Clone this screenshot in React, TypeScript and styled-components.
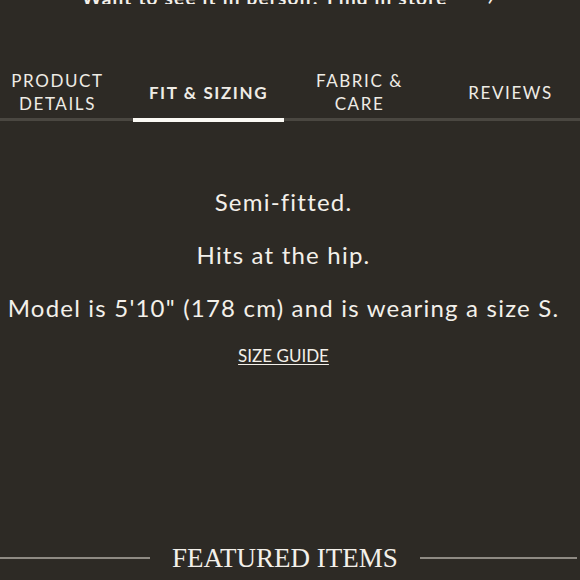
import React, {useState} from 'react';
import styled, {createGlobalStyle} from 'styled-components';

const GlobalStyle = createGlobalStyle`
    html, body {
        margin: 0;
        padding: 0;
        background: #2d2a25;
        overflow: hidden;
    }
    body {
        font-family: Lato, "Open Sans", sans-serif;
        color: #f3f0ea;
    }
`;

const Page = styled.div`
    width: 580px;
    height: 580px;
    overflow: hidden;
    display: flex;
    flex-direction: column;
`;

// the page is scrolled: only the foot of this line shows
const TopClip = styled.div`
    height: 4px;
    overflow: hidden;
    display: flex;
    align-items: flex-end;
    justify-content: center;
    gap: 40px;
    font-size: 19px;
    font-weight: 700;
    line-height: 12px;
    letter-spacing: 1.2px;
    padding-right: 4px;
`;

const TabsWrap = styled.div`
    margin-top: 62px;
    border-bottom: 3px solid #4a4741;
`;

const TabRow = styled.div`
    display: grid;
    grid-template-columns: repeat(4, 151px);
    margin-left: -18px;
    width: 604px;
`;

const Tab = styled.button<{$active?: boolean}>`
    position: relative;
    height: 52px;
    display: flex;
    align-items: center;
    justify-content: center;
    background: none;
    border: none;
    padding: 0;
    color: #efece5;
    font-family: Lato, "Open Sans", sans-serif;
    font-size: 17px;
    font-weight: ${p => (p.$active ? 700 : 400)};
    letter-spacing: 1.6px;
    line-height: 23px;
    text-transform: uppercase;
    text-align: center;
    white-space: pre-line;
    cursor: pointer;

    &::after {
        content: '';
        display: ${p => (p.$active ? 'block' : 'none')};
        position: absolute;
        left: 0;
        right: 0;
        bottom: -4px;
        height: 4px;
        background: #fbf9f4;
    }
`;

const Content = styled.div`
    padding-top: 66px;
    padding-right: 13px;
    display: flex;
    flex-direction: column;
    align-items: center;
    gap: 23px;
`;

const Line = styled.p`
    margin: 0;
    font-size: 24px;
    line-height: 30px;
    letter-spacing: 1.2px;
    white-space: nowrap;
`;

const GuideLink = styled.a`
    font-size: 17px;
    line-height: 20px;
    color: #f3f0ea;
    text-decoration: underline;
    text-underline-offset: 2px;
`;

const Featured = styled.div`
    margin-top: 177px;
    display: flex;
    align-items: center;
    gap: 22px;
    padding-right: 3px;
`;

const Rule = styled.div<{$w?: number}>`
    flex: ${p => (p.$w ? `0 0 ${p.$w}px` : '1')};
    height: 2px;
    background: #8e8a83;
`;

const FeaturedTitle = styled.h2`
    margin: 0;
    font-family: "Liberation Serif", serif;
    font-weight: 400;
    font-size: 27px;
    line-height: 30px;
    letter-spacing: 0;
    color: #f3f0ea;
`;

const tabs = [
    {id: 'details', label: 'Product\nDetails'},
    {id: 'fit', label: 'Fit & Sizing'},
    {id: 'fabric', label: 'Fabric &\nCare'},
    {id: 'reviews', label: 'Reviews'},
];

export default function App() {
    const [active, setActive] = useState('fit');

    return (
        <Page>
            <GlobalStyle />
            <TopClip>
                <span>Want to see it in person? Find in store</span>
                <span>›</span>
            </TopClip>
            <TabsWrap>
                <TabRow>
                    {tabs.map(t => (
                        <Tab key={t.id} $active={t.id === active} onClick={() => setActive(t.id)}>
                            {t.label}
                        </Tab>
                    ))}
                </TabRow>
            </TabsWrap>
            <Content>
                <Line>Semi-fitted.</Line>
                <Line>Hits at the hip.</Line>
                <Line>Model is 5'10" (178 cm) and is wearing a size S.</Line>
                <GuideLink href="#">SIZE GUIDE</GuideLink>
            </Content>
            <Featured>
                <Rule $w={150} />
                <FeaturedTitle>FEATURED ITEMS</FeaturedTitle>
                <Rule />
            </Featured>
        </Page>
    );
}
